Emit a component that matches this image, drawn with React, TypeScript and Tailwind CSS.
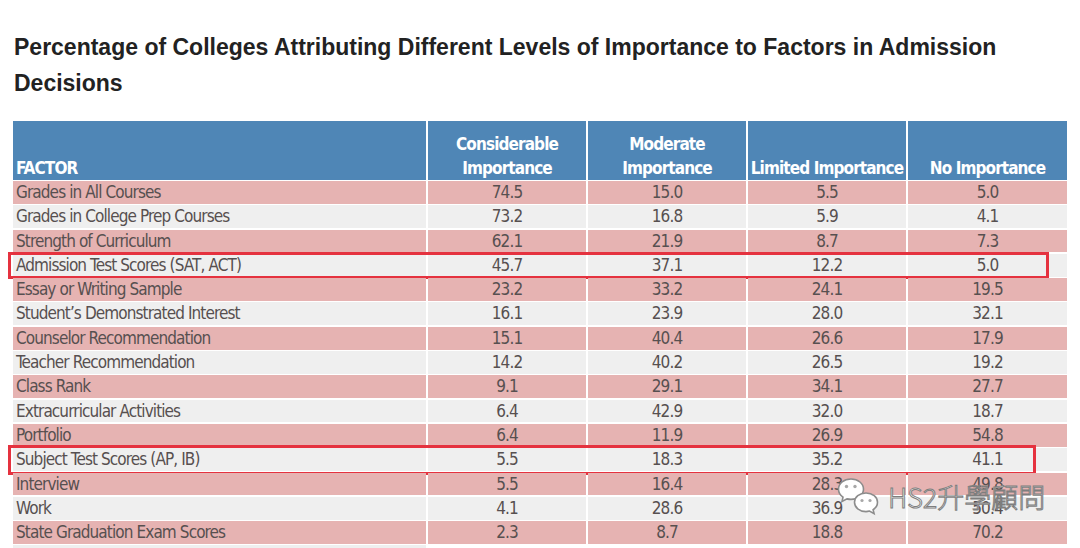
import React from "react";

type Row = { factor: string; values: string[]; mark?: "wide" | "narrow" };

const rows: Row[] = [
  { factor: "Grades in All Courses", values: ["74.5", "15.0", "5.5", "5.0"] },
  { factor: "Grades in College Prep Courses", values: ["73.2", "16.8", "5.9", "4.1"] },
  { factor: "Strength of Curriculum", values: ["62.1", "21.9", "8.7", "7.3"] },
  { factor: "Admission Test Scores (SAT, ACT)", values: ["45.7", "37.1", "12.2", "5.0"], mark: "wide" },
  { factor: "Essay or Writing Sample", values: ["23.2", "33.2", "24.1", "19.5"] },
  { factor: "Student\u2019s Demonstrated Interest", values: ["16.1", "23.9", "28.0", "32.1"] },
  { factor: "Counselor Recommendation", values: ["15.1", "40.4", "26.6", "17.9"] },
  { factor: "Teacher Recommendation", values: ["14.2", "40.2", "26.5", "19.2"] },
  { factor: "Class Rank", values: ["9.1", "29.1", "34.1", "27.7"] },
  { factor: "Extracurricular Activities", values: ["6.4", "42.9", "32.0", "18.7"] },
  { factor: "Portfolio", values: ["6.4", "11.9", "26.9", "54.8"] },
  { factor: "Subject Test Scores (AP, IB)", values: ["5.5", "18.3", "35.2", "41.1"], mark: "narrow" },
  { factor: "Interview", values: ["5.5", "16.4", "28.3", "49.8"] },
  { factor: "Work", values: ["4.1", "28.6", "36.9", "50.4"] },
  { factor: "State Graduation Exam Scores", values: ["2.3", "8.7", "18.8", "70.2"] },
];

const narrow = "font-['DejaVu_Sans_Condensed','Liberation_Sans',sans-serif]";

function WeChatMark() {
  return (
    <svg width="48" height="40" viewBox="0 0 46 40" className="shrink-0">
      <path
        d="M14 2C6.8 2 1.5 6.6 1.5 12.2c0 3.2 1.7 6 4.5 7.9L5 24.5l5-2.6c1.3.3 2.6.5 4 .5 7.2 0 12.5-4.6 12.5-10.2S21.2 2 14 2z"
        fill="#fff"
        stroke="#8c8c8c"
        strokeWidth="1.6"
      />
      <circle cx="9.5" cy="9.5" r="1.7" fill="#a8a8a8" />
      <circle cx="18" cy="9.5" r="1.7" fill="#a8a8a8" />
      <path
        d="M29 16c-6.6 0-11.5 4.2-11.5 9.3S22.4 34.6 29 34.6c1.2 0 2.4-.2 3.5-.5l4.6 2.6-1-4c2.7-1.7 4.4-4.4 4.4-7.4C40.5 20.2 35.6 16 29 16z"
        fill="#fff"
        stroke="#8c8c8c"
        strokeWidth="1.6"
      />
      <circle cx="25" cy="23.5" r="1.6" fill="#a8a8a8" />
      <circle cx="33" cy="23.5" r="1.6" fill="#a8a8a8" />
    </svg>
  );
}

export default function App() {
  return (
    <div className="relative w-[1080px] h-[548px] overflow-hidden bg-white">
      <h1 className="pt-[29px] pl-[14px] pr-[40px] text-[23px] leading-[36px] font-bold text-[#222] font-['Liberation_Sans',Arial,sans-serif]">
        Percentage of Colleges Attributing Different Levels of Importance to Factors in Admission Decisions
      </h1>

      <div className={`mt-[20px] ml-[13px] w-[1054px] ${narrow}`}>
        {/* header */}
        <div className="grid grid-cols-[413px_158px_158px_158px_159px] gap-x-[2px] h-[59px] text-white font-bold text-[17px] leading-[24px] tracking-[-0.9px] whitespace-nowrap">
          <div className="bg-[#4f86b6] flex items-end pl-[3px]">FACTOR</div>
          <div className="bg-[#4f86b6] flex items-end justify-center text-center">Considerable<br />Importance</div>
          <div className="bg-[#4f86b6] flex items-end justify-center text-center">Moderate<br />Importance</div>
          <div className="bg-[#4f86b6] flex items-end justify-center text-center">Limited Importance</div>
          <div className="bg-[#4f86b6] flex items-end justify-center text-center">No Importance</div>
        </div>

        {/* body */}
        <div className="mt-[1px] flex flex-col">
          {rows.map((r, i) => {
            const bg = i % 2 === 0 ? "bg-[#e6b3b2]" : "bg-[#efefef]";
            return (
              <div key={r.factor} className="relative grid grid-cols-[413px_158px_158px_158px_159px] gap-x-[2px] h-[24.3px] pb-[1.5px] text-[17px] leading-[22px] tracking-[-0.9px] text-[#575050]">
                <div className={`${bg} pl-[3px] whitespace-nowrap`}>{r.factor}</div>
                {r.values.map((v, j) => (
                  <div key={j} className={`${bg} text-center`}>{v}</div>
                ))}
                {r.mark === "wide" && (
                  <div className="absolute left-[-5px] right-[18px] top-[-2px] bottom-[-1px] border-[3.5px] border-[#e5323f]" />
                )}
                {r.mark === "narrow" && (
                  <div className="absolute left-[-5px] right-[31px] top-[-3px] bottom-[-2px] border-[3.5px] border-[#e5323f]" />
                )}
              </div>
            );
          })}
          <div className="h-[6px] bg-[#efefef] w-[413px]" />
        </div>
      </div>

      {/* watermark */}
      <div className="absolute left-[836px] top-[477px] flex items-center gap-[4px]">
        <WeChatMark />
        <span className="text-[27px] leading-[32px] text-white font-['Noto_Sans_CJK_TC','Noto_Sans',sans-serif] font-light [-webkit-text-stroke:1px_#7e7e7e]">
          HS2升學顧問
        </span>
      </div>
    </div>
  );
}
